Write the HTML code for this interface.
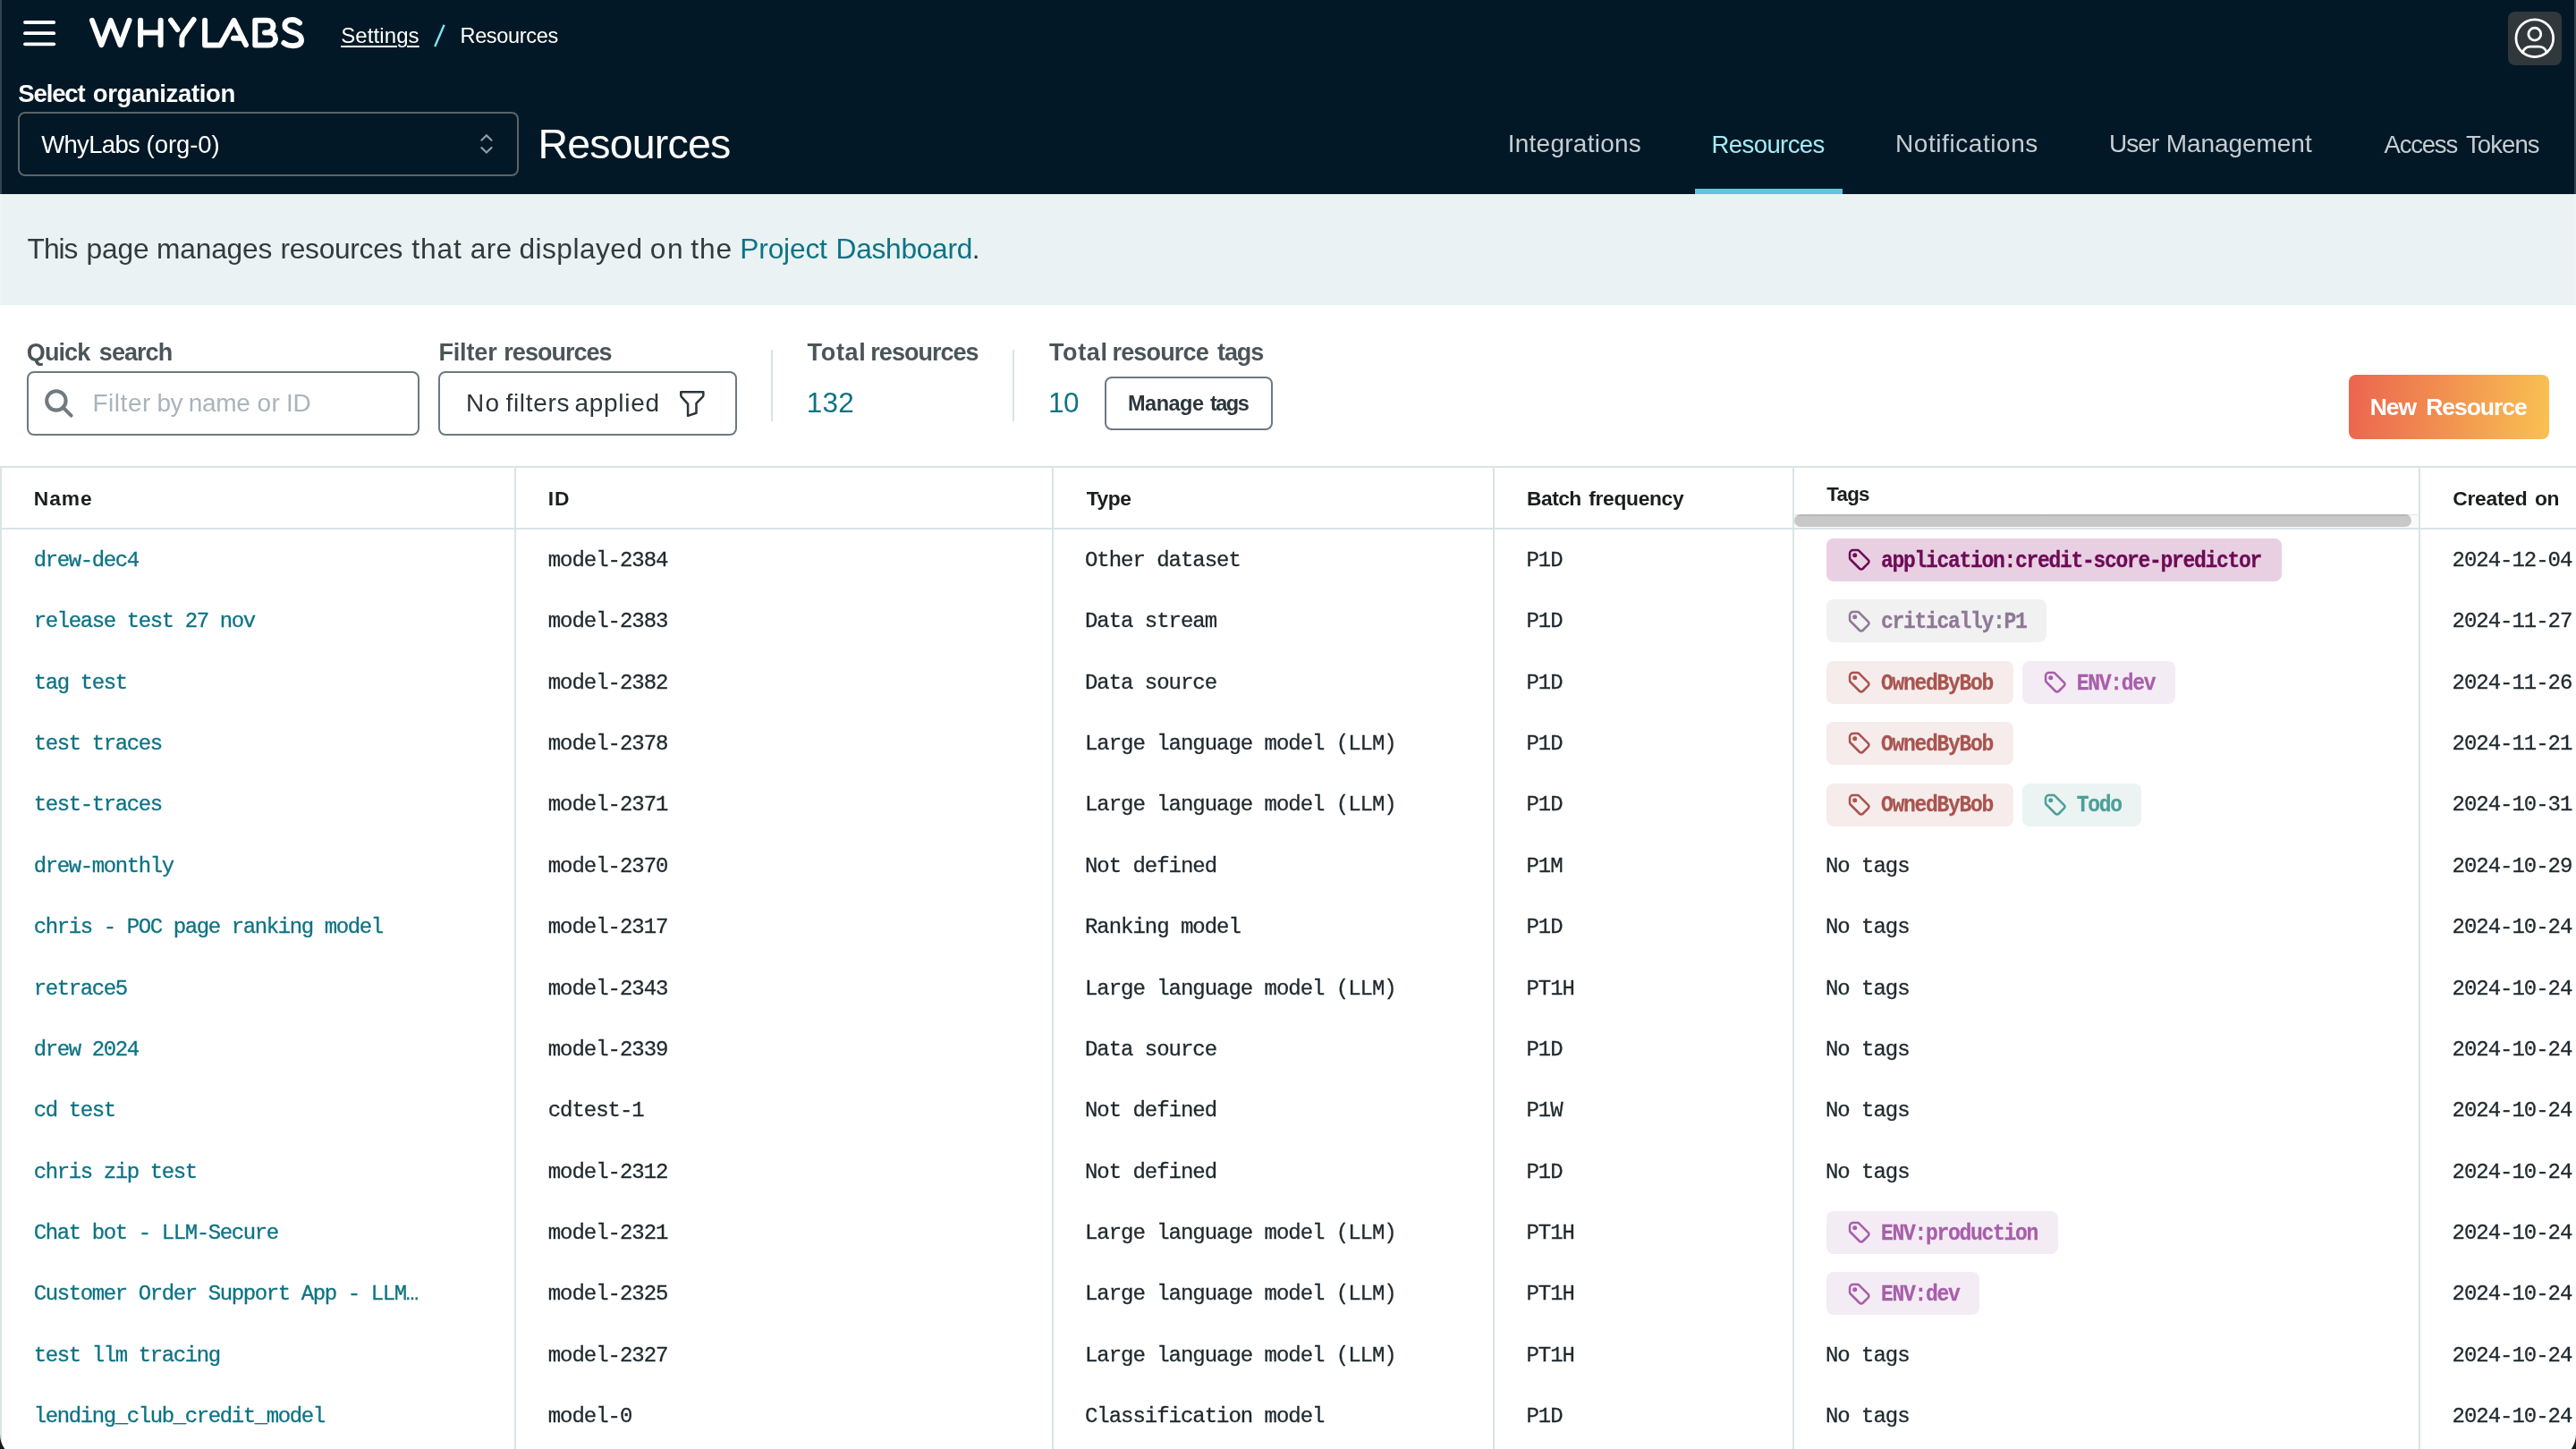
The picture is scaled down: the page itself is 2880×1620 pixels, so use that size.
<!DOCTYPE html>
<html><head><meta charset="utf-8"><title>Resources</title>
<style>
html,body{margin:0;padding:0;}
body{width:2880px;height:1620px;overflow:hidden;background:#fff;position:relative;font-family:'Liberation Sans', sans-serif;}
.t{position:absolute;white-space:nowrap;display:block;}
.abs{position:absolute;}
#hdr{position:absolute;left:0;top:0;width:2880px;height:217px;background:#021826;}
#banner-bg{position:absolute;left:0;top:217px;width:2880px;height:124px;background:#eaf2f3;}
.box{position:absolute;box-sizing:border-box;border:2px solid #6c7a80;border-radius:8px;background:#fff;}
.vl{position:absolute;top:521px;width:2px;height:1099px;background:#dae4e7;}
.hl{position:absolute;left:0;width:2880px;height:2px;background:#dae4e7;}
.bd{position:absolute;height:48px;border-radius:8px;box-sizing:border-box;}
.ti{position:absolute;left:21.1px;top:8.2px;width:30.3px;height:30.3px;fill:none;stroke:currentColor;stroke-width:2;stroke-linecap:round;stroke-linejoin:round;}
#wrap{position:absolute;left:0;top:0;width:2880px;height:1620px;overflow:hidden;will-change:transform;background:#fff;}
</style></head><body><div id="wrap">
<div id="hdr"></div>
<div id="banner-bg"></div>
<!-- hamburger -->
<svg class="abs" style="left:20px;top:15px" width="50" height="45" viewBox="20 15 50 45"><g stroke="#fff" stroke-width="3.8" stroke-linecap="round"><line x1="28" y1="25" x2="60.2" y2="25"/><line x1="28" y1="37.2" x2="60.2" y2="37.2"/><line x1="28" y1="49.3" x2="60.2" y2="49.3"/></g></svg>
<!-- logo -->
<svg class="abs" style="left:90px;top:10px" width="260" height="55" viewBox="90 10 260 55" fill="none" stroke="#fff" stroke-width="6" stroke-linecap="round" stroke-linejoin="round">
<path d="M102.9 22.8 L113.4 50.2 L123.8 22.8 L134.4 50.2 L144.6 22.8"/>
<path d="M157.1 22.8 V50.2 M179.6 22.8 V50.2 M157.1 36.4 H179.6"/>
<path d="M191 22.6 L198.4 33"/>
<path d="M216.6 22 L205 38.6 Q203.4 40.8 203.4 43.5 V50.2"/>
<path d="M229.1 22.8 V50.4 H246.5 L261.6 22.8 L275 50.2"/>
<path d="M261 42.8 H271"/>
<path d="M285.3 50.4 V22.8 H298.7 A6.8 6.8 0 0 1 298.7 36.4 H296 M298.7 36.4 H301 A7 7 0 0 1 301 50.4 H285.3"/>
<path d="M335 25.6 Q331 21.9 326.5 21.9 Q318.4 22.4 318.4 28.6 Q318.4 33.2 326 35.6 Q337 38.6 337 44.6 Q337 51 327.5 51.2 Q321.5 51.2 317.4 48"/>
</svg>
<!-- breadcrumb slash -->
<svg class="abs" style="left:480px;top:22px" width="24" height="36" viewBox="480 22 24 36"><line x1="486.2" y1="52" x2="496.6" y2="27.8" stroke="#7fe3f5" stroke-width="2.4" stroke-linecap="butt"/></svg>
<!-- org select -->
<div class="abs" style="left:20px;top:125px;width:560px;height:72px;box-sizing:border-box;border:2px solid #5c6367;border-radius:8px;"></div>
<svg class="abs" style="left:530px;top:145px" width="30" height="34" viewBox="530 145 30 34" fill="none" stroke="#8f999f" stroke-width="2.2" stroke-linecap="round" stroke-linejoin="miter"><path d="M538.4 156.8 L543.9 151.4 L549.5 156.8"/><path d="M538.4 165.1 L543.9 170.5 L549.5 165.1"/></svg>
<!-- active tab underline -->
<div class="abs" style="left:1895px;top:211px;width:165px;height:6px;background:#60c4da"></div>
<!-- avatar -->
<div class="abs" style="left:2804px;top:13px;width:60px;height:60px;border-radius:8px;background:#30383c"></div>
<svg class="abs" style="left:2806.2px;top:15.2px" width="55.6" height="55.6" viewBox="0 0 24 24" fill="none" stroke="#fff" stroke-width="1.2" stroke-linecap="round" stroke-linejoin="round"><circle cx="12" cy="12" r="9"/><circle cx="12" cy="10" r="3"/><path d="M6.168 18.849a4 4 0 0 1 3.832 -2.849h4a4 4 0 0 1 3.834 2.855"/></svg>
<!-- toolbar -->
<div class="box" style="left:30px;top:415px;width:439px;height:72px"></div>
<svg class="abs" style="left:44px;top:430px" width="44" height="44" viewBox="44 430 44 44" fill="none" stroke="#6f7b80" stroke-width="4.1" stroke-linecap="round"><circle cx="62.9" cy="447.9" r="10.7"/><line x1="70.6" y1="455.6" x2="79.6" y2="464.6"/></svg>
<div class="box" style="left:490px;top:415px;width:334px;height:72px"></div>
<svg class="abs" style="left:755.2px;top:431.9px" width="37.6" height="37.6" viewBox="0 0 24 24" fill="none" stroke="#2b363b" stroke-width="1.6" stroke-linecap="round" stroke-linejoin="round"><path d="M4 4h16v2.172a2 2 0 0 1 -.586 1.414l-4.414 4.414v7l-6 2v-8.5l-4.480 -4.928a2 2 0 0 1 -.520 -1.345v-2.227z"/></svg>
<div class="abs" style="left:862px;top:391px;width:2px;height:80px;background:#d7e3e6"></div>
<div class="abs" style="left:1132px;top:391px;width:2px;height:80px;background:#d7e3e6"></div>
<div class="box" style="left:1235px;top:421px;width:188px;height:60px;"></div>
<div class="abs" style="left:2626px;top:419px;width:224px;height:72px;border-radius:8px;background:linear-gradient(94deg,#ea5b4f -10%,#f9c452 103%)"></div>
<!-- table -->
<div class="hl" style="top:521px"></div>
<div class="hl" style="top:590px"></div>
<div class="vl" style="left:0px"></div><div class="vl" style="left:575px"></div><div class="vl" style="left:1176px"></div><div class="vl" style="left:1669px"></div><div class="vl" style="left:2004px"></div><div class="vl" style="left:2704px"></div>
<div class="abs" style="left:2006px;top:575px;width:698px;height:15px;background:linear-gradient(#e8e8e8 0,#e8e8e8 1.5px,#fafafa 1.5px)"></div>
<div class="abs" style="left:2006.4px;top:575px;width:689.5px;height:13.8px;border-radius:7px;background:linear-gradient(#b6b6b6 0,#b8b8b8 1.6px,#c8c8c8 2.2px)"></div>
<div class="bd" style="left:2042.00px;top:602.10px;width:508.70px;background:#e8d0e2;color:#6e0a56"><svg class="ti" viewBox="0 0 24 24"><circle cx="8.5" cy="8.5" r="1" fill="currentColor"/><path d="M4 7v3.859c0 .537 .213 1.052 .593 1.432l8.116 8.116a2.025 2.025 0 0 0 2.864 0l4.834 -4.834a2.025 2.025 0 0 0 0 -2.864l-8.117 -8.116a2.025 2.025 0 0 0 -1.431 -.593h-3.859a3 3 0 0 0 -3 3z"/></svg></div><div class="bd" style="left:2042.00px;top:670.46px;width:246.20px;background:#f1f1f1;color:#8f7896"><svg class="ti" viewBox="0 0 24 24"><circle cx="8.5" cy="8.5" r="1" fill="currentColor"/><path d="M4 7v3.859c0 .537 .213 1.052 .593 1.432l8.116 8.116a2.025 2.025 0 0 0 2.864 0l4.834 -4.834a2.025 2.025 0 0 0 0 -2.864l-8.117 -8.116a2.025 2.025 0 0 0 -1.431 -.593h-3.859a3 3 0 0 0 -3 3z"/></svg></div><div class="bd" style="left:2042.00px;top:738.82px;width:208.70px;background:#f6ecec;color:#a9544f"><svg class="ti" viewBox="0 0 24 24"><circle cx="8.5" cy="8.5" r="1" fill="currentColor"/><path d="M4 7v3.859c0 .537 .213 1.052 .593 1.432l8.116 8.116a2.025 2.025 0 0 0 2.864 0l4.834 -4.834a2.025 2.025 0 0 0 0 -2.864l-8.117 -8.116a2.025 2.025 0 0 0 -1.431 -.593h-3.859a3 3 0 0 0 -3 3z"/></svg></div><div class="bd" style="left:2260.80px;top:738.82px;width:171.20px;background:#f4ecf5;color:#a85eaa"><svg class="ti" viewBox="0 0 24 24"><circle cx="8.5" cy="8.5" r="1" fill="currentColor"/><path d="M4 7v3.859c0 .537 .213 1.052 .593 1.432l8.116 8.116a2.025 2.025 0 0 0 2.864 0l4.834 -4.834a2.025 2.025 0 0 0 0 -2.864l-8.117 -8.116a2.025 2.025 0 0 0 -1.431 -.593h-3.859a3 3 0 0 0 -3 3z"/></svg></div><div class="bd" style="left:2042.00px;top:807.18px;width:208.70px;background:#f6ecec;color:#a9544f"><svg class="ti" viewBox="0 0 24 24"><circle cx="8.5" cy="8.5" r="1" fill="currentColor"/><path d="M4 7v3.859c0 .537 .213 1.052 .593 1.432l8.116 8.116a2.025 2.025 0 0 0 2.864 0l4.834 -4.834a2.025 2.025 0 0 0 0 -2.864l-8.117 -8.116a2.025 2.025 0 0 0 -1.431 -.593h-3.859a3 3 0 0 0 -3 3z"/></svg></div><div class="bd" style="left:2042.00px;top:875.54px;width:208.70px;background:#f6ecec;color:#a9544f"><svg class="ti" viewBox="0 0 24 24"><circle cx="8.5" cy="8.5" r="1" fill="currentColor"/><path d="M4 7v3.859c0 .537 .213 1.052 .593 1.432l8.116 8.116a2.025 2.025 0 0 0 2.864 0l4.834 -4.834a2.025 2.025 0 0 0 0 -2.864l-8.117 -8.116a2.025 2.025 0 0 0 -1.431 -.593h-3.859a3 3 0 0 0 -3 3z"/></svg></div><div class="bd" style="left:2260.80px;top:875.54px;width:133.70px;background:#ebf4f3;color:#4d9f99"><svg class="ti" viewBox="0 0 24 24"><circle cx="8.5" cy="8.5" r="1" fill="currentColor"/><path d="M4 7v3.859c0 .537 .213 1.052 .593 1.432l8.116 8.116a2.025 2.025 0 0 0 2.864 0l4.834 -4.834a2.025 2.025 0 0 0 0 -2.864l-8.117 -8.116a2.025 2.025 0 0 0 -1.431 -.593h-3.859a3 3 0 0 0 -3 3z"/></svg></div><div class="bd" style="left:2042.00px;top:1354.06px;width:258.70px;background:#f4ecf5;color:#a85eaa"><svg class="ti" viewBox="0 0 24 24"><circle cx="8.5" cy="8.5" r="1" fill="currentColor"/><path d="M4 7v3.859c0 .537 .213 1.052 .593 1.432l8.116 8.116a2.025 2.025 0 0 0 2.864 0l4.834 -4.834a2.025 2.025 0 0 0 0 -2.864l-8.117 -8.116a2.025 2.025 0 0 0 -1.431 -.593h-3.859a3 3 0 0 0 -3 3z"/></svg></div><div class="bd" style="left:2042.00px;top:1422.42px;width:171.20px;background:#f4ecf5;color:#a85eaa"><svg class="ti" viewBox="0 0 24 24"><circle cx="8.5" cy="8.5" r="1" fill="currentColor"/><path d="M4 7v3.859c0 .537 .213 1.052 .593 1.432l8.116 8.116a2.025 2.025 0 0 0 2.864 0l4.834 -4.834a2.025 2.025 0 0 0 0 -2.864l-8.117 -8.116a2.025 2.025 0 0 0 -1.431 -.593h-3.859a3 3 0 0 0 -3 3z"/></svg></div>
<span class="t" style="left:37.80px;top:615.10px;font:400 24.0px/1 'Liberation Mono', monospace;letter-spacing:-1.400px;color:#0e7384;transform:scaleY(1.03);transform-origin:0 18.40px;-webkit-text-stroke:0.3px;">drew-dec4</span><span class="t" style="left:612.70px;top:615.10px;font:400 24.0px/1 'Liberation Mono', monospace;letter-spacing:-1.030px;color:#1f292e;transform:scaleY(1.03);transform-origin:0 18.40px;-webkit-text-stroke:0.3px;">model-2384</span><span class="t" style="left:1213.00px;top:615.10px;font:400 24.0px/1 'Liberation Mono', monospace;letter-spacing:-1.030px;color:#1f292e;transform:scaleY(1.03);transform-origin:0 18.40px;-webkit-text-stroke:0.3px;">Other dataset</span><span class="t" style="left:1706.50px;top:615.10px;font:400 24.0px/1 'Liberation Mono', monospace;letter-spacing:-1.030px;color:#1f292e;transform:scaleY(1.03);transform-origin:0 18.40px;-webkit-text-stroke:0.3px;">P1D</span><span class="t" style="left:2741.60px;top:615.10px;font:400 24.0px/1 'Liberation Mono', monospace;letter-spacing:-1.030px;color:#1f292e;transform:scaleY(1.03);transform-origin:0 18.40px;-webkit-text-stroke:0.3px;">2024-12-04</span><span class="t" style="left:2103.00px;top:617.27px;font:700 23.0px/1 'Liberation Mono', monospace;letter-spacing:-1.300px;color:#6e0a56;transform:scaleY(1.1);transform-origin:0 17.63px;-webkit-text-stroke:0.25px;">application:credit-score-predictor</span><span class="t" style="left:37.80px;top:683.10px;font:400 24.0px/1 'Liberation Mono', monospace;letter-spacing:-1.400px;color:#0e7384;transform:scaleY(1.03);transform-origin:0 18.40px;-webkit-text-stroke:0.3px;">release test 27 nov</span><span class="t" style="left:612.70px;top:683.10px;font:400 24.0px/1 'Liberation Mono', monospace;letter-spacing:-1.030px;color:#1f292e;transform:scaleY(1.03);transform-origin:0 18.40px;-webkit-text-stroke:0.3px;">model-2383</span><span class="t" style="left:1213.00px;top:683.10px;font:400 24.0px/1 'Liberation Mono', monospace;letter-spacing:-1.030px;color:#1f292e;transform:scaleY(1.03);transform-origin:0 18.40px;-webkit-text-stroke:0.3px;">Data stream</span><span class="t" style="left:1706.50px;top:683.10px;font:400 24.0px/1 'Liberation Mono', monospace;letter-spacing:-1.030px;color:#1f292e;transform:scaleY(1.03);transform-origin:0 18.40px;-webkit-text-stroke:0.3px;">P1D</span><span class="t" style="left:2741.60px;top:683.10px;font:400 24.0px/1 'Liberation Mono', monospace;letter-spacing:-1.030px;color:#1f292e;transform:scaleY(1.03);transform-origin:0 18.40px;-webkit-text-stroke:0.3px;">2024-11-27</span><span class="t" style="left:2103.00px;top:685.27px;font:700 23.0px/1 'Liberation Mono', monospace;letter-spacing:-1.300px;color:#8f7896;transform:scaleY(1.1);transform-origin:0 17.63px;-webkit-text-stroke:0.25px;">critically:P1</span><span class="t" style="left:37.80px;top:752.10px;font:400 24.0px/1 'Liberation Mono', monospace;letter-spacing:-1.400px;color:#0e7384;transform:scaleY(1.03);transform-origin:0 18.40px;-webkit-text-stroke:0.3px;">tag test</span><span class="t" style="left:612.70px;top:752.10px;font:400 24.0px/1 'Liberation Mono', monospace;letter-spacing:-1.030px;color:#1f292e;transform:scaleY(1.03);transform-origin:0 18.40px;-webkit-text-stroke:0.3px;">model-2382</span><span class="t" style="left:1213.00px;top:752.10px;font:400 24.0px/1 'Liberation Mono', monospace;letter-spacing:-1.030px;color:#1f292e;transform:scaleY(1.03);transform-origin:0 18.40px;-webkit-text-stroke:0.3px;">Data source</span><span class="t" style="left:1706.50px;top:752.10px;font:400 24.0px/1 'Liberation Mono', monospace;letter-spacing:-1.030px;color:#1f292e;transform:scaleY(1.03);transform-origin:0 18.40px;-webkit-text-stroke:0.3px;">P1D</span><span class="t" style="left:2741.60px;top:752.10px;font:400 24.0px/1 'Liberation Mono', monospace;letter-spacing:-1.030px;color:#1f292e;transform:scaleY(1.03);transform-origin:0 18.40px;-webkit-text-stroke:0.3px;">2024-11-26</span><span class="t" style="left:2103.00px;top:754.27px;font:700 23.0px/1 'Liberation Mono', monospace;letter-spacing:-1.300px;color:#a9544f;transform:scaleY(1.1);transform-origin:0 17.63px;-webkit-text-stroke:0.25px;">OwnedByBob</span><span class="t" style="left:2321.80px;top:754.27px;font:700 23.0px/1 'Liberation Mono', monospace;letter-spacing:-1.300px;color:#a85eaa;transform:scaleY(1.1);transform-origin:0 17.63px;-webkit-text-stroke:0.25px;">ENV:dev</span><span class="t" style="left:37.80px;top:820.10px;font:400 24.0px/1 'Liberation Mono', monospace;letter-spacing:-1.400px;color:#0e7384;transform:scaleY(1.03);transform-origin:0 18.40px;-webkit-text-stroke:0.3px;">test traces</span><span class="t" style="left:612.70px;top:820.10px;font:400 24.0px/1 'Liberation Mono', monospace;letter-spacing:-1.030px;color:#1f292e;transform:scaleY(1.03);transform-origin:0 18.40px;-webkit-text-stroke:0.3px;">model-2378</span><span class="t" style="left:1213.00px;top:820.10px;font:400 24.0px/1 'Liberation Mono', monospace;letter-spacing:-1.030px;color:#1f292e;transform:scaleY(1.03);transform-origin:0 18.40px;-webkit-text-stroke:0.3px;">Large language model (LLM)</span><span class="t" style="left:1706.50px;top:820.10px;font:400 24.0px/1 'Liberation Mono', monospace;letter-spacing:-1.030px;color:#1f292e;transform:scaleY(1.03);transform-origin:0 18.40px;-webkit-text-stroke:0.3px;">P1D</span><span class="t" style="left:2741.60px;top:820.10px;font:400 24.0px/1 'Liberation Mono', monospace;letter-spacing:-1.030px;color:#1f292e;transform:scaleY(1.03);transform-origin:0 18.40px;-webkit-text-stroke:0.3px;">2024-11-21</span><span class="t" style="left:2103.00px;top:822.27px;font:700 23.0px/1 'Liberation Mono', monospace;letter-spacing:-1.300px;color:#a9544f;transform:scaleY(1.1);transform-origin:0 17.63px;-webkit-text-stroke:0.25px;">OwnedByBob</span><span class="t" style="left:37.80px;top:888.10px;font:400 24.0px/1 'Liberation Mono', monospace;letter-spacing:-1.400px;color:#0e7384;transform:scaleY(1.03);transform-origin:0 18.40px;-webkit-text-stroke:0.3px;">test-traces</span><span class="t" style="left:612.70px;top:888.10px;font:400 24.0px/1 'Liberation Mono', monospace;letter-spacing:-1.030px;color:#1f292e;transform:scaleY(1.03);transform-origin:0 18.40px;-webkit-text-stroke:0.3px;">model-2371</span><span class="t" style="left:1213.00px;top:888.10px;font:400 24.0px/1 'Liberation Mono', monospace;letter-spacing:-1.030px;color:#1f292e;transform:scaleY(1.03);transform-origin:0 18.40px;-webkit-text-stroke:0.3px;">Large language model (LLM)</span><span class="t" style="left:1706.50px;top:888.10px;font:400 24.0px/1 'Liberation Mono', monospace;letter-spacing:-1.030px;color:#1f292e;transform:scaleY(1.03);transform-origin:0 18.40px;-webkit-text-stroke:0.3px;">P1D</span><span class="t" style="left:2741.60px;top:888.10px;font:400 24.0px/1 'Liberation Mono', monospace;letter-spacing:-1.030px;color:#1f292e;transform:scaleY(1.03);transform-origin:0 18.40px;-webkit-text-stroke:0.3px;">2024-10-31</span><span class="t" style="left:2103.00px;top:890.27px;font:700 23.0px/1 'Liberation Mono', monospace;letter-spacing:-1.300px;color:#a9544f;transform:scaleY(1.1);transform-origin:0 17.63px;-webkit-text-stroke:0.25px;">OwnedByBob</span><span class="t" style="left:2321.80px;top:890.27px;font:700 23.0px/1 'Liberation Mono', monospace;letter-spacing:-1.300px;color:#4d9f99;transform:scaleY(1.1);transform-origin:0 17.63px;-webkit-text-stroke:0.25px;">Todo</span><span class="t" style="left:37.80px;top:957.10px;font:400 24.0px/1 'Liberation Mono', monospace;letter-spacing:-1.400px;color:#0e7384;transform:scaleY(1.03);transform-origin:0 18.40px;-webkit-text-stroke:0.3px;">drew-monthly</span><span class="t" style="left:612.70px;top:957.10px;font:400 24.0px/1 'Liberation Mono', monospace;letter-spacing:-1.030px;color:#1f292e;transform:scaleY(1.03);transform-origin:0 18.40px;-webkit-text-stroke:0.3px;">model-2370</span><span class="t" style="left:1213.00px;top:957.10px;font:400 24.0px/1 'Liberation Mono', monospace;letter-spacing:-1.030px;color:#1f292e;transform:scaleY(1.03);transform-origin:0 18.40px;-webkit-text-stroke:0.3px;">Not defined</span><span class="t" style="left:1706.50px;top:957.10px;font:400 24.0px/1 'Liberation Mono', monospace;letter-spacing:-1.030px;color:#1f292e;transform:scaleY(1.03);transform-origin:0 18.40px;-webkit-text-stroke:0.3px;">P1M</span><span class="t" style="left:2741.60px;top:957.10px;font:400 24.0px/1 'Liberation Mono', monospace;letter-spacing:-1.030px;color:#1f292e;transform:scaleY(1.03);transform-origin:0 18.40px;-webkit-text-stroke:0.3px;">2024-10-29</span><span class="t" style="left:2041.00px;top:957.10px;font:400 24.0px/1 'Liberation Mono', monospace;letter-spacing:-1.030px;color:#1f292e;transform:scaleY(1.03);transform-origin:0 18.40px;-webkit-text-stroke:0.3px;">No tags</span><span class="t" style="left:37.80px;top:1025.10px;font:400 24.0px/1 'Liberation Mono', monospace;letter-spacing:-1.400px;color:#0e7384;transform:scaleY(1.03);transform-origin:0 18.40px;-webkit-text-stroke:0.3px;">chris - POC page ranking model</span><span class="t" style="left:612.70px;top:1025.10px;font:400 24.0px/1 'Liberation Mono', monospace;letter-spacing:-1.030px;color:#1f292e;transform:scaleY(1.03);transform-origin:0 18.40px;-webkit-text-stroke:0.3px;">model-2317</span><span class="t" style="left:1213.00px;top:1025.10px;font:400 24.0px/1 'Liberation Mono', monospace;letter-spacing:-1.030px;color:#1f292e;transform:scaleY(1.03);transform-origin:0 18.40px;-webkit-text-stroke:0.3px;">Ranking model</span><span class="t" style="left:1706.50px;top:1025.10px;font:400 24.0px/1 'Liberation Mono', monospace;letter-spacing:-1.030px;color:#1f292e;transform:scaleY(1.03);transform-origin:0 18.40px;-webkit-text-stroke:0.3px;">P1D</span><span class="t" style="left:2741.60px;top:1025.10px;font:400 24.0px/1 'Liberation Mono', monospace;letter-spacing:-1.030px;color:#1f292e;transform:scaleY(1.03);transform-origin:0 18.40px;-webkit-text-stroke:0.3px;">2024-10-24</span><span class="t" style="left:2041.00px;top:1025.10px;font:400 24.0px/1 'Liberation Mono', monospace;letter-spacing:-1.030px;color:#1f292e;transform:scaleY(1.03);transform-origin:0 18.40px;-webkit-text-stroke:0.3px;">No tags</span><span class="t" style="left:37.80px;top:1094.10px;font:400 24.0px/1 'Liberation Mono', monospace;letter-spacing:-1.400px;color:#0e7384;transform:scaleY(1.03);transform-origin:0 18.40px;-webkit-text-stroke:0.3px;">retrace5</span><span class="t" style="left:612.70px;top:1094.10px;font:400 24.0px/1 'Liberation Mono', monospace;letter-spacing:-1.030px;color:#1f292e;transform:scaleY(1.03);transform-origin:0 18.40px;-webkit-text-stroke:0.3px;">model-2343</span><span class="t" style="left:1213.00px;top:1094.10px;font:400 24.0px/1 'Liberation Mono', monospace;letter-spacing:-1.030px;color:#1f292e;transform:scaleY(1.03);transform-origin:0 18.40px;-webkit-text-stroke:0.3px;">Large language model (LLM)</span><span class="t" style="left:1706.50px;top:1094.10px;font:400 24.0px/1 'Liberation Mono', monospace;letter-spacing:-1.030px;color:#1f292e;transform:scaleY(1.03);transform-origin:0 18.40px;-webkit-text-stroke:0.3px;">PT1H</span><span class="t" style="left:2741.60px;top:1094.10px;font:400 24.0px/1 'Liberation Mono', monospace;letter-spacing:-1.030px;color:#1f292e;transform:scaleY(1.03);transform-origin:0 18.40px;-webkit-text-stroke:0.3px;">2024-10-24</span><span class="t" style="left:2041.00px;top:1094.10px;font:400 24.0px/1 'Liberation Mono', monospace;letter-spacing:-1.030px;color:#1f292e;transform:scaleY(1.03);transform-origin:0 18.40px;-webkit-text-stroke:0.3px;">No tags</span><span class="t" style="left:37.80px;top:1162.10px;font:400 24.0px/1 'Liberation Mono', monospace;letter-spacing:-1.400px;color:#0e7384;transform:scaleY(1.03);transform-origin:0 18.40px;-webkit-text-stroke:0.3px;">drew 2024</span><span class="t" style="left:612.70px;top:1162.10px;font:400 24.0px/1 'Liberation Mono', monospace;letter-spacing:-1.030px;color:#1f292e;transform:scaleY(1.03);transform-origin:0 18.40px;-webkit-text-stroke:0.3px;">model-2339</span><span class="t" style="left:1213.00px;top:1162.10px;font:400 24.0px/1 'Liberation Mono', monospace;letter-spacing:-1.030px;color:#1f292e;transform:scaleY(1.03);transform-origin:0 18.40px;-webkit-text-stroke:0.3px;">Data source</span><span class="t" style="left:1706.50px;top:1162.10px;font:400 24.0px/1 'Liberation Mono', monospace;letter-spacing:-1.030px;color:#1f292e;transform:scaleY(1.03);transform-origin:0 18.40px;-webkit-text-stroke:0.3px;">P1D</span><span class="t" style="left:2741.60px;top:1162.10px;font:400 24.0px/1 'Liberation Mono', monospace;letter-spacing:-1.030px;color:#1f292e;transform:scaleY(1.03);transform-origin:0 18.40px;-webkit-text-stroke:0.3px;">2024-10-24</span><span class="t" style="left:2041.00px;top:1162.10px;font:400 24.0px/1 'Liberation Mono', monospace;letter-spacing:-1.030px;color:#1f292e;transform:scaleY(1.03);transform-origin:0 18.40px;-webkit-text-stroke:0.3px;">No tags</span><span class="t" style="left:37.80px;top:1230.10px;font:400 24.0px/1 'Liberation Mono', monospace;letter-spacing:-1.400px;color:#0e7384;transform:scaleY(1.03);transform-origin:0 18.40px;-webkit-text-stroke:0.3px;">cd test</span><span class="t" style="left:612.70px;top:1230.10px;font:400 24.0px/1 'Liberation Mono', monospace;letter-spacing:-1.030px;color:#1f292e;transform:scaleY(1.03);transform-origin:0 18.40px;-webkit-text-stroke:0.3px;">cdtest-1</span><span class="t" style="left:1213.00px;top:1230.10px;font:400 24.0px/1 'Liberation Mono', monospace;letter-spacing:-1.030px;color:#1f292e;transform:scaleY(1.03);transform-origin:0 18.40px;-webkit-text-stroke:0.3px;">Not defined</span><span class="t" style="left:1706.50px;top:1230.10px;font:400 24.0px/1 'Liberation Mono', monospace;letter-spacing:-1.030px;color:#1f292e;transform:scaleY(1.03);transform-origin:0 18.40px;-webkit-text-stroke:0.3px;">P1W</span><span class="t" style="left:2741.60px;top:1230.10px;font:400 24.0px/1 'Liberation Mono', monospace;letter-spacing:-1.030px;color:#1f292e;transform:scaleY(1.03);transform-origin:0 18.40px;-webkit-text-stroke:0.3px;">2024-10-24</span><span class="t" style="left:2041.00px;top:1230.10px;font:400 24.0px/1 'Liberation Mono', monospace;letter-spacing:-1.030px;color:#1f292e;transform:scaleY(1.03);transform-origin:0 18.40px;-webkit-text-stroke:0.3px;">No tags</span><span class="t" style="left:37.80px;top:1299.10px;font:400 24.0px/1 'Liberation Mono', monospace;letter-spacing:-1.400px;color:#0e7384;transform:scaleY(1.03);transform-origin:0 18.40px;-webkit-text-stroke:0.3px;">chris zip test</span><span class="t" style="left:612.70px;top:1299.10px;font:400 24.0px/1 'Liberation Mono', monospace;letter-spacing:-1.030px;color:#1f292e;transform:scaleY(1.03);transform-origin:0 18.40px;-webkit-text-stroke:0.3px;">model-2312</span><span class="t" style="left:1213.00px;top:1299.10px;font:400 24.0px/1 'Liberation Mono', monospace;letter-spacing:-1.030px;color:#1f292e;transform:scaleY(1.03);transform-origin:0 18.40px;-webkit-text-stroke:0.3px;">Not defined</span><span class="t" style="left:1706.50px;top:1299.10px;font:400 24.0px/1 'Liberation Mono', monospace;letter-spacing:-1.030px;color:#1f292e;transform:scaleY(1.03);transform-origin:0 18.40px;-webkit-text-stroke:0.3px;">P1D</span><span class="t" style="left:2741.60px;top:1299.10px;font:400 24.0px/1 'Liberation Mono', monospace;letter-spacing:-1.030px;color:#1f292e;transform:scaleY(1.03);transform-origin:0 18.40px;-webkit-text-stroke:0.3px;">2024-10-24</span><span class="t" style="left:2041.00px;top:1299.10px;font:400 24.0px/1 'Liberation Mono', monospace;letter-spacing:-1.030px;color:#1f292e;transform:scaleY(1.03);transform-origin:0 18.40px;-webkit-text-stroke:0.3px;">No tags</span><span class="t" style="left:37.80px;top:1367.10px;font:400 24.0px/1 'Liberation Mono', monospace;letter-spacing:-1.400px;color:#0e7384;transform:scaleY(1.03);transform-origin:0 18.40px;-webkit-text-stroke:0.3px;">Chat bot - LLM-Secure</span><span class="t" style="left:612.70px;top:1367.10px;font:400 24.0px/1 'Liberation Mono', monospace;letter-spacing:-1.030px;color:#1f292e;transform:scaleY(1.03);transform-origin:0 18.40px;-webkit-text-stroke:0.3px;">model-2321</span><span class="t" style="left:1213.00px;top:1367.10px;font:400 24.0px/1 'Liberation Mono', monospace;letter-spacing:-1.030px;color:#1f292e;transform:scaleY(1.03);transform-origin:0 18.40px;-webkit-text-stroke:0.3px;">Large language model (LLM)</span><span class="t" style="left:1706.50px;top:1367.10px;font:400 24.0px/1 'Liberation Mono', monospace;letter-spacing:-1.030px;color:#1f292e;transform:scaleY(1.03);transform-origin:0 18.40px;-webkit-text-stroke:0.3px;">PT1H</span><span class="t" style="left:2741.60px;top:1367.10px;font:400 24.0px/1 'Liberation Mono', monospace;letter-spacing:-1.030px;color:#1f292e;transform:scaleY(1.03);transform-origin:0 18.40px;-webkit-text-stroke:0.3px;">2024-10-24</span><span class="t" style="left:2103.00px;top:1369.27px;font:700 23.0px/1 'Liberation Mono', monospace;letter-spacing:-1.300px;color:#a85eaa;transform:scaleY(1.1);transform-origin:0 17.63px;-webkit-text-stroke:0.25px;">ENV:production</span><span class="t" style="left:37.80px;top:1435.10px;font:400 24.0px/1 'Liberation Mono', monospace;letter-spacing:-1.400px;color:#0e7384;transform:scaleY(1.03);transform-origin:0 18.40px;-webkit-text-stroke:0.3px;">Customer Order Support App - LLM…</span><span class="t" style="left:612.70px;top:1435.10px;font:400 24.0px/1 'Liberation Mono', monospace;letter-spacing:-1.030px;color:#1f292e;transform:scaleY(1.03);transform-origin:0 18.40px;-webkit-text-stroke:0.3px;">model-2325</span><span class="t" style="left:1213.00px;top:1435.10px;font:400 24.0px/1 'Liberation Mono', monospace;letter-spacing:-1.030px;color:#1f292e;transform:scaleY(1.03);transform-origin:0 18.40px;-webkit-text-stroke:0.3px;">Large language model (LLM)</span><span class="t" style="left:1706.50px;top:1435.10px;font:400 24.0px/1 'Liberation Mono', monospace;letter-spacing:-1.030px;color:#1f292e;transform:scaleY(1.03);transform-origin:0 18.40px;-webkit-text-stroke:0.3px;">PT1H</span><span class="t" style="left:2741.60px;top:1435.10px;font:400 24.0px/1 'Liberation Mono', monospace;letter-spacing:-1.030px;color:#1f292e;transform:scaleY(1.03);transform-origin:0 18.40px;-webkit-text-stroke:0.3px;">2024-10-24</span><span class="t" style="left:2103.00px;top:1437.27px;font:700 23.0px/1 'Liberation Mono', monospace;letter-spacing:-1.300px;color:#a85eaa;transform:scaleY(1.1);transform-origin:0 17.63px;-webkit-text-stroke:0.25px;">ENV:dev</span><span class="t" style="left:37.80px;top:1504.10px;font:400 24.0px/1 'Liberation Mono', monospace;letter-spacing:-1.400px;color:#0e7384;transform:scaleY(1.03);transform-origin:0 18.40px;-webkit-text-stroke:0.3px;">test llm tracing</span><span class="t" style="left:612.70px;top:1504.10px;font:400 24.0px/1 'Liberation Mono', monospace;letter-spacing:-1.030px;color:#1f292e;transform:scaleY(1.03);transform-origin:0 18.40px;-webkit-text-stroke:0.3px;">model-2327</span><span class="t" style="left:1213.00px;top:1504.10px;font:400 24.0px/1 'Liberation Mono', monospace;letter-spacing:-1.030px;color:#1f292e;transform:scaleY(1.03);transform-origin:0 18.40px;-webkit-text-stroke:0.3px;">Large language model (LLM)</span><span class="t" style="left:1706.50px;top:1504.10px;font:400 24.0px/1 'Liberation Mono', monospace;letter-spacing:-1.030px;color:#1f292e;transform:scaleY(1.03);transform-origin:0 18.40px;-webkit-text-stroke:0.3px;">PT1H</span><span class="t" style="left:2741.60px;top:1504.10px;font:400 24.0px/1 'Liberation Mono', monospace;letter-spacing:-1.030px;color:#1f292e;transform:scaleY(1.03);transform-origin:0 18.40px;-webkit-text-stroke:0.3px;">2024-10-24</span><span class="t" style="left:2041.00px;top:1504.10px;font:400 24.0px/1 'Liberation Mono', monospace;letter-spacing:-1.030px;color:#1f292e;transform:scaleY(1.03);transform-origin:0 18.40px;-webkit-text-stroke:0.3px;">No tags</span><span class="t" style="left:37.80px;top:1572.10px;font:400 24.0px/1 'Liberation Mono', monospace;letter-spacing:-1.400px;color:#0e7384;transform:scaleY(1.03);transform-origin:0 18.40px;-webkit-text-stroke:0.3px;">lending_club_credit_model</span><span class="t" style="left:612.70px;top:1572.10px;font:400 24.0px/1 'Liberation Mono', monospace;letter-spacing:-1.030px;color:#1f292e;transform:scaleY(1.03);transform-origin:0 18.40px;-webkit-text-stroke:0.3px;">model-0</span><span class="t" style="left:1213.00px;top:1572.10px;font:400 24.0px/1 'Liberation Mono', monospace;letter-spacing:-1.030px;color:#1f292e;transform:scaleY(1.03);transform-origin:0 18.40px;-webkit-text-stroke:0.3px;">Classification model</span><span class="t" style="left:1706.50px;top:1572.10px;font:400 24.0px/1 'Liberation Mono', monospace;letter-spacing:-1.030px;color:#1f292e;transform:scaleY(1.03);transform-origin:0 18.40px;-webkit-text-stroke:0.3px;">P1D</span><span class="t" style="left:2741.60px;top:1572.10px;font:400 24.0px/1 'Liberation Mono', monospace;letter-spacing:-1.030px;color:#1f292e;transform:scaleY(1.03);transform-origin:0 18.40px;-webkit-text-stroke:0.3px;">2024-10-24</span><span class="t" style="left:2041.00px;top:1572.10px;font:400 24.0px/1 'Liberation Mono', monospace;letter-spacing:-1.030px;color:#1f292e;transform:scaleY(1.03);transform-origin:0 18.40px;-webkit-text-stroke:0.3px;">No tags</span>
<span class="t" style="left:381.20px;top:28.28px;font:400 24px/1 'Liberation Sans', sans-serif;letter-spacing:0.097px;color:#fff;text-decoration:underline;text-decoration-thickness:2px;text-underline-offset:3px;">Settings</span><span class="t" style="left:514.50px;top:28.71px;font:400 23.5px/1 'Liberation Sans', sans-serif;letter-spacing:-0.334px;color:#fff;">Resources</span><span class="t" style="left:20.30px;top:90.72px;font:700 27.5px/1 'Liberation Sans', sans-serif;letter-spacing:-1.133px;color:#fff;">Select</span><span class="t" style="left:103.80px;top:90.72px;font:700 27.5px/1 'Liberation Sans', sans-serif;letter-spacing:-0.370px;color:#fff;">organization</span><span class="t" style="left:46.20px;top:147.52px;font:400 27.5px/1 'Liberation Sans', sans-serif;letter-spacing:-0.680px;color:#fff;">WhyLabs</span><span class="t" style="left:163.60px;top:147.52px;font:400 27.5px/1 'Liberation Sans', sans-serif;letter-spacing:-0.059px;color:#fff;">(org-0)</span><span class="t" style="left:601.50px;top:138.44px;font:400 46.5px/1 'Liberation Sans', sans-serif;letter-spacing:-0.814px;color:#fff;">Resources</span><span class="t" style="left:1685.70px;top:147.30px;font:400 28px/1 'Liberation Sans', sans-serif;letter-spacing:0.253px;color:#c5cdd2;">Integrations</span><span class="t" style="left:1913.60px;top:147.72px;font:400 27.5px/1 'Liberation Sans', sans-serif;letter-spacing:-0.599px;color:#a3ebf7;">Resources</span><span class="t" style="left:2119.00px;top:147.30px;font:400 28px/1 'Liberation Sans', sans-serif;letter-spacing:0.566px;color:#c5cdd2;">Notifications</span><span class="t" style="left:2357.90px;top:147.30px;font:400 28px/1 'Liberation Sans', sans-serif;letter-spacing:-0.898px;color:#c5cdd2;">User</span><span class="t" style="left:2421.70px;top:147.30px;font:400 28px/1 'Liberation Sans', sans-serif;letter-spacing:-0.050px;color:#c5cdd2;">Management</span><span class="t" style="left:2665.50px;top:147.72px;font:400 27.5px/1 'Liberation Sans', sans-serif;letter-spacing:-1.197px;color:#c5cdd2;">Access</span><span class="t" style="left:2757.00px;top:147.72px;font:400 27.5px/1 'Liberation Sans', sans-serif;letter-spacing:-0.917px;color:#c5cdd2;">Tokens</span><span class="t" style="left:30.60px;top:262.97px;font:400 31.7px/1 'Liberation Sans', sans-serif;letter-spacing:-1.006px;color:#313b3d;">This</span><span class="t" style="left:96.60px;top:262.97px;font:400 31.7px/1 'Liberation Sans', sans-serif;letter-spacing:-0.156px;color:#313b3d;">page</span><span class="t" style="left:175.10px;top:262.97px;font:400 31.7px/1 'Liberation Sans', sans-serif;letter-spacing:-0.185px;color:#313b3d;">manages</span><span class="t" style="left:313.50px;top:262.97px;font:400 31.7px/1 'Liberation Sans', sans-serif;letter-spacing:-0.286px;color:#313b3d;">resources</span><span class="t" style="left:460.20px;top:262.97px;font:400 31.7px/1 'Liberation Sans', sans-serif;letter-spacing:0.917px;color:#313b3d;">that</span><span class="t" style="left:525.80px;top:262.97px;font:400 31.7px/1 'Liberation Sans', sans-serif;letter-spacing:0.262px;color:#313b3d;">are</span><span class="t" style="left:580.40px;top:262.97px;font:400 31.7px/1 'Liberation Sans', sans-serif;letter-spacing:0.468px;color:#313b3d;">displayed</span><span class="t" style="left:726.80px;top:262.97px;font:400 31.7px/1 'Liberation Sans', sans-serif;letter-spacing:1.577px;color:#313b3d;">on</span><span class="t" style="left:772.20px;top:262.97px;font:400 31.7px/1 'Liberation Sans', sans-serif;letter-spacing:0.937px;color:#313b3d;">the</span><span class="t" style="left:827.30px;top:262.97px;font:400 31.7px/1 'Liberation Sans', sans-serif;letter-spacing:-0.170px;color:#0e7384;">Project</span><span class="t" style="left:934.60px;top:262.97px;font:400 31.7px/1 'Liberation Sans', sans-serif;letter-spacing:-0.287px;color:#0e7384;">Dashboard</span><span class="t" style="left:1086.80px;top:262.97px;font:400 31.7px/1 'Liberation Sans', sans-serif;letter-spacing:0.000px;color:#313b3d;">.</span><span class="t" style="left:29.80px;top:380.74px;font:700 27px/1 'Liberation Sans', sans-serif;letter-spacing:-0.903px;color:#4a555a;">Quick</span><span class="t" style="left:110.80px;top:380.74px;font:700 27px/1 'Liberation Sans', sans-serif;letter-spacing:-0.934px;color:#4a555a;">search</span><span class="t" style="left:490.40px;top:380.74px;font:700 27px/1 'Liberation Sans', sans-serif;letter-spacing:-0.141px;color:#4a555a;">Filter</span><span class="t" style="left:563.30px;top:380.74px;font:700 27px/1 'Liberation Sans', sans-serif;letter-spacing:-0.971px;color:#4a555a;">resources</span><span class="t" style="left:902.60px;top:380.74px;font:700 27px/1 'Liberation Sans', sans-serif;letter-spacing:0.653px;color:#4a555a;">Total</span><span class="t" style="left:973.30px;top:380.74px;font:700 27px/1 'Liberation Sans', sans-serif;letter-spacing:-0.971px;color:#4a555a;">resources</span><span class="t" style="left:1173.00px;top:380.74px;font:700 27px/1 'Liberation Sans', sans-serif;letter-spacing:0.603px;color:#4a555a;">Total</span><span class="t" style="left:1243.50px;top:380.74px;font:700 27px/1 'Liberation Sans', sans-serif;letter-spacing:-0.835px;color:#4a555a;">resource</span><span class="t" style="left:1361.00px;top:380.74px;font:700 27px/1 'Liberation Sans', sans-serif;letter-spacing:-1.067px;color:#4a555a;">tags</span><span class="t" style="left:103.40px;top:437.10px;font:400 28px/1 'Liberation Sans', sans-serif;letter-spacing:0.541px;color:#a9b4bc;">Filter</span><span class="t" style="left:175.60px;top:437.10px;font:400 28px/1 'Liberation Sans', sans-serif;letter-spacing:-0.572px;color:#a9b4bc;">by</span><span class="t" style="left:210.80px;top:437.10px;font:400 28px/1 'Liberation Sans', sans-serif;letter-spacing:-0.356px;color:#a9b4bc;">name</span><span class="t" style="left:287.50px;top:437.10px;font:400 28px/1 'Liberation Sans', sans-serif;letter-spacing:0.528px;color:#a9b4bc;">or</span><span class="t" style="left:319.90px;top:437.10px;font:400 28px/1 'Liberation Sans', sans-serif;letter-spacing:-0.279px;color:#a9b4bc;">ID</span><span class="t" style="left:521.10px;top:436.90px;font:400 28px/1 'Liberation Sans', sans-serif;letter-spacing:1.079px;color:#2b363b;">No</span><span class="t" style="left:565.50px;top:436.90px;font:400 28px/1 'Liberation Sans', sans-serif;letter-spacing:0.667px;color:#2b363b;">filters</span><span class="t" style="left:642.50px;top:436.90px;font:400 28px/1 'Liberation Sans', sans-serif;letter-spacing:0.712px;color:#2b363b;">applied</span><span class="t" style="left:901.80px;top:435.14px;font:400 31.5px/1 'Liberation Sans', sans-serif;letter-spacing:0.231px;color:#0e7384;">132</span><span class="t" style="left:1172.00px;top:435.14px;font:400 31.5px/1 'Liberation Sans', sans-serif;letter-spacing:-0.519px;color:#0e7384;">10</span><span class="t" style="left:1261.00px;top:439.81px;font:700 23.5px/1 'Liberation Sans', sans-serif;letter-spacing:-0.505px;color:#2b363b;">Manage</span><span class="t" style="left:1352.90px;top:439.81px;font:700 23.5px/1 'Liberation Sans', sans-serif;letter-spacing:-1.483px;color:#2b363b;">tags</span><span class="t" style="left:2649.80px;top:442.07px;font:700 26.5px/1 'Liberation Sans', sans-serif;letter-spacing:-1.138px;color:#fff;">New</span><span class="t" style="left:2712.20px;top:442.07px;font:700 26.5px/1 'Liberation Sans', sans-serif;letter-spacing:-1.034px;color:#fff;">Resource</span><span class="t" style="left:37.80px;top:545.50px;font:700 22.8px/1 'Liberation Sans', sans-serif;letter-spacing:0.929px;color:#1a1e20;">Name</span><span class="t" style="left:612.70px;top:545.50px;font:700 22.8px/1 'Liberation Sans', sans-serif;letter-spacing:0.966px;color:#1a1e20;">ID</span><span class="t" style="left:1214.70px;top:545.50px;font:700 22.8px/1 'Liberation Sans', sans-serif;letter-spacing:-0.412px;color:#1a1e20;">Type</span><span class="t" style="left:1707.10px;top:545.50px;font:700 22.8px/1 'Liberation Sans', sans-serif;letter-spacing:-0.553px;color:#1a1e20;">Batch</span><span class="t" style="left:1776.20px;top:545.50px;font:700 22.8px/1 'Liberation Sans', sans-serif;letter-spacing:-0.309px;color:#1a1e20;">frequency</span><span class="t" style="left:2042.30px;top:541.92px;font:700 22.3px/1 'Liberation Sans', sans-serif;letter-spacing:-0.762px;color:#1a1e20;">Tags</span><span class="t" style="left:2742.20px;top:545.50px;font:700 22.8px/1 'Liberation Sans', sans-serif;letter-spacing:-0.244px;color:#1a1e20;">Created</span><span class="t" style="left:2834.10px;top:545.50px;font:700 22.8px/1 'Liberation Sans', sans-serif;letter-spacing:-0.425px;color:#1a1e20;">on</span>
<!-- window edge strips -->
<div class="abs" style="left:0;top:0;width:2px;height:217px;background:#33434f"></div>
<div class="abs" style="left:0;top:217px;width:2px;height:124px;background:#eef4f5"></div>
<div class="abs" style="left:2878px;top:217px;width:2px;height:124px;background:#eef4f5"></div>
<div class="abs" style="left:2878px;top:0;width:2px;height:217px;background:#33434f"></div>
<svg class="abs" style="left:0;top:1600px" width="2880" height="20" viewBox="0 1600 2880 20"><path d="M0 1603.5 A28.8 28.8 0 0 0 5.3 1620 L0 1620 Z" fill="#1b1b1b"/><path d="M2880 1603.8 A28.8 28.8 0 0 1 2874.8 1620 L2880 1620 Z" fill="#1b1b1b"/></svg>
</div></body></html>
